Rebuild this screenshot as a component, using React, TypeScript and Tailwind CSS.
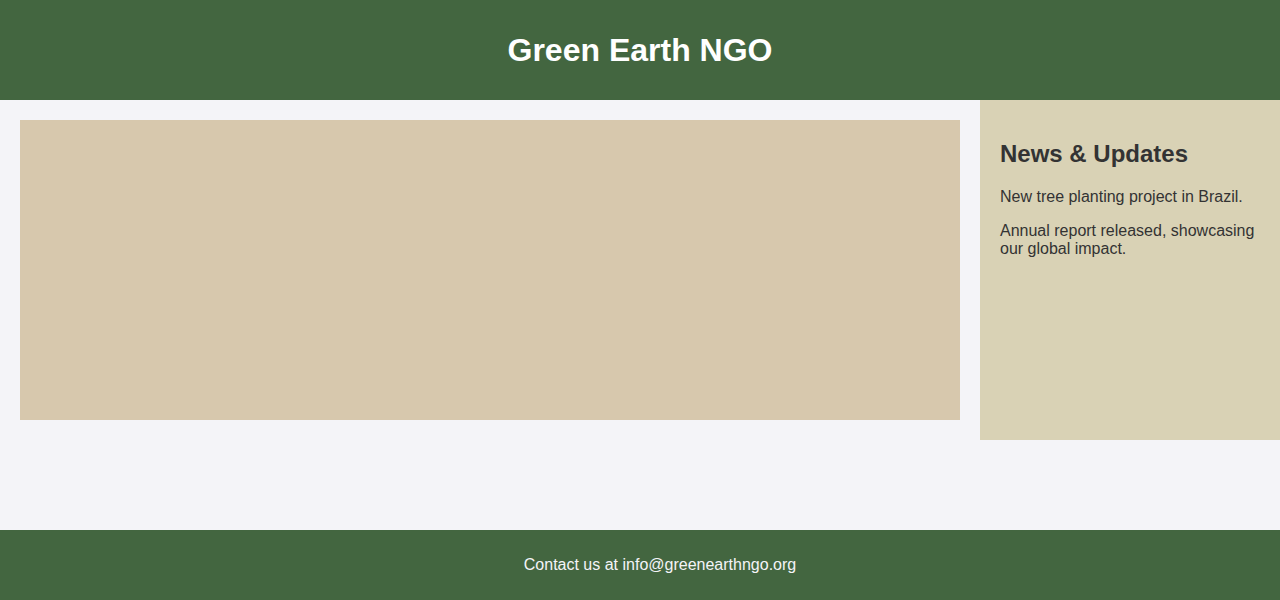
import React from "react";

const news = [
  "New tree planting project in Brazil.",
  "Annual report released, showcasing our global impact.",
];

const App: React.FC = () => {
  return (
    <div className="min-h-[600px] bg-[#f4f4f8] font-['Liberation_Sans',Arial,sans-serif] text-[#333333] overflow-hidden">
      <header className="h-[100px] bg-[#436640] flex items-center justify-center">
        <h1 className="text-[32px] font-bold text-white leading-[37px]">
          Green Earth NGO
        </h1>
      </header>
      <div className="h-[430px]">
        <main className="flex">
          <div className="flex-1 p-5">
            <div className="h-[300px] bg-[#d7c8ad]" />
          </div>
          <aside className="w-[300px] bg-[#d9d2b5] p-5">
            <h2 className="text-2xl font-bold leading-[28px] my-5">
              News &amp; Updates
            </h2>
            {news.map((item, index) => (
              <p key={index} className="text-base leading-[18px] mb-4">
                {item}
              </p>
            ))}
          </aside>
        </main>
      </div>
      <footer className="h-[70px] bg-[#436640] flex items-center justify-center pl-10 text-[#f4f4f8] text-base">
        Contact us at info@greenearthngo.org
      </footer>
    </div>
  );
};

export default App;
